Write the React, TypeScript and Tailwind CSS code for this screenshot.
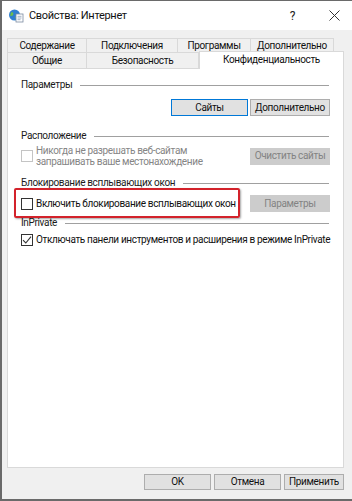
import React from "react";

const font = "font-['Segoe_UI','Roboto',sans-serif]";

function GroupHeader({ title, className = "" }: { title: string; className?: string }) {
  return (
    <div className={`flex h-[14px] items-center gap-[8px] mr-[1px] ${className}`}>
      <span className="whitespace-nowrap text-[#1b1b1b]">{title}</span>
      <div className="h-px flex-1 bg-[#a0a0a0]" />
    </div>
  );
}

function Check({ checked = false, disabled = false }: { checked?: boolean; disabled?: boolean }) {
  return (
    <div
      className={`flex h-[12px] w-[12px] shrink-0 items-center justify-center border bg-white ${
        disabled ? "border-[#c4c4c4]" : "border-[#333333]"
      }`}
    >
      {checked && (
        <svg width="10" height="10" viewBox="0 0 10 10">
          <path d="M1 5.2 L3.8 8 L9 1.6" fill="none" stroke="#333" strokeWidth="1.1" />
        </svg>
      )}
    </div>
  );
}

function Btn({
  children,
  w,
  primary = false,
  disabled = false,
  h = "h-[17px]",
}: {
  children: React.ReactNode;
  w: string;
  primary?: boolean;
  disabled?: boolean;
  h?: string;
}) {
  const style = disabled
    ? "bg-[#cccccc] border-[#cccccc] text-[#838383]"
    : primary
    ? "bg-[#e1e1e1] border-[#0078d7] text-[#111]"
    : "bg-[#e1e1e1] border-[#adadad] text-[#111]";
  return (
    <div className={`flex ${h} ${w} shrink-0 items-center justify-center whitespace-nowrap border ${style}`}>
      {children}
    </div>
  );
}

function Tab({ label, w, first = false }: { label: string; w: string; first?: boolean }) {
  return (
    <div
      className={`flex h-full ${w} items-center justify-center border border-b-0 border-[#d9d9d9] bg-[#f0f0f0] ${
        first ? "" : "-ml-px"
      }`}
    >
      {label}
    </div>
  );
}

export default function App() {
  return (
    <div
      className={`${font} flex h-[501px] w-[352px] flex-col bg-[#6a6a6a] text-[10px] leading-none tracking-[-0.35px] text-[#111]`}
    >
      <div className="ml-[2px] mt-px mb-[2px] flex flex-1 flex-col bg-[#f0f0f0]">
        {/* title bar */}
        <div className="flex h-[29px] items-center bg-white">
          <svg className="ml-[6px]" width="16" height="16" viewBox="0 0 16 16">
            <circle cx="6.5" cy="7" r="5.5" fill="#2f7fd0" />
            <path d="M3 4.5 C5 3.5 6 5.5 5 7 C4 8.5 3 7.5 2 8" fill="#6cbf4a" />
            <path d="M7 9 C8.5 8 9.5 10 8.5 11.5" fill="#6cbf4a" />
            <rect x="8" y="6" width="7" height="8" fill="#ffffff" stroke="#7a8aa0" strokeWidth="0.8" />
            <path d="M9.5 8.3 H13.5 M9.5 10 H13.5 M9.5 11.7 H12.5" stroke="#8da0b8" strokeWidth="0.8" />
          </svg>
          <span className="ml-[5px] text-[11px] tracking-[-0.3px] text-[#111]">Свойства: Интернет</span>
          <span className="ml-auto mr-[34px] text-[12px] text-[#222]">?</span>
          <svg className="mr-[12px]" width="11" height="11" viewBox="0 0 11 11">
            <path d="M0.5 0.5 L10.5 10.5 M10.5 0.5 L0.5 10.5" stroke="#333" strokeWidth="1" />
          </svg>
        </div>

        {/* tabs */}
        <div className="ml-[5px] mr-[8px] mt-[8px] flex flex-col">
          <div className="flex h-[14px]">
            <Tab first label="Содержание" w="w-[80px]" />
            <Tab label="Подключения" w="w-[92px]" />
            <Tab label="Программы" w="w-[74px]" />
            <Tab label="Дополнительно" w="w-[84px]" />
          </div>
          <div className="-mt-px flex h-[17px] items-end">
            <div className="flex h-[16px] w-[80px] items-center justify-center border border-b-0 border-[#d9d9d9] bg-[#f0f0f0]">
              Общие
            </div>
            <div className="-ml-px flex h-[16px] w-[113px] items-center justify-center border border-b-0 border-[#d9d9d9] bg-[#f0f0f0]">
              Безопасность
            </div>
            <div className="relative z-10 -mb-px flex h-[18px] flex-1 items-center justify-center border border-b-0 border-[#d9d9d9] bg-white pb-[1px]">
              Конфиденциальность
            </div>
          </div>

          {/* panel */}
          <div className="flex h-[400px] flex-col border border-[#d9d9d9] bg-white pl-[13px] pr-[13px]">
            <GroupHeader title="Параметры" className="mt-[9px]" />
            <div className="mt-[7px] flex justify-end gap-[2px]">
              <Btn primary w="w-[77px]">Сайты</Btn>
              <Btn w="w-[80px]">Дополнительно</Btn>
            </div>

            <GroupHeader title="Расположение" className="mt-[13px]" />
            <div className="mt-[3px] flex h-[20px] items-center">
              <Check disabled />
              <div className="ml-[3px] flex flex-col whitespace-nowrap leading-[11px] text-[#858585]">
                <span>Никогда не разрешать веб-сайтам</span>
                <span>запрашивать ваше местонахождение</span>
              </div>
              <div className="ml-auto">
                <Btn disabled w="w-[80px]">Очистить сайты</Btn>
              </div>
            </div>

            <GroupHeader title="Блокирование всплывающих окон" className="mt-[10px]" />
            <div className="relative mt-[5px] flex h-[17px] items-center">
              <Check />
              <span className="ml-[3px] whitespace-nowrap">Включить блокирование всплывающих окон</span>
              <div className="ml-auto">
                <Btn disabled w="w-[80px]">Параметры</Btn>
              </div>
              <div className="pointer-events-none absolute left-[-7px] top-[-7px] h-[30px] w-[226px] rounded-[2px] border-2 border-[#d3222b] shadow-[1px_1px_2px_rgba(0,0,0,0.35)]" />
            </div>

            <GroupHeader title="InPrivate" className="mt-[4px]" />
            <div className="mt-[3px] flex h-[14px] items-center">
              <Check checked />
              <span className="ml-[3px] whitespace-nowrap">
                Отключать панели инструментов и расширения в режиме InPrivate
              </span>
            </div>
          </div>
        </div>

        {/* bottom buttons */}
        <div className="mt-[6px] mr-[8px] flex justify-end gap-[3px]">
          <Btn h="h-[16px]" w="w-[67px]">OK</Btn>
          <Btn h="h-[16px]" w="w-[67px]">Отмена</Btn>
          <Btn h="h-[16px]" w="w-[60px]">Применить</Btn>
        </div>
      </div>
    </div>
  );
}
